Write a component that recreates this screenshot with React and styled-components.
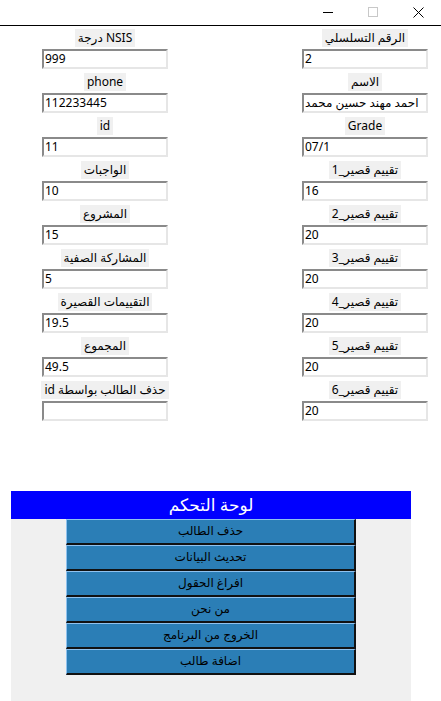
import React from "react";
import styled, { createGlobalStyle } from "styled-components";

const Global = createGlobalStyle`
  html, body { margin: 0; padding: 0; background: #fff; }
  body { width: 441px; height: 701px; overflow: hidden; font-family: "Noto Sans", "DejaVu Sans", sans-serif; }
`;

const Window = styled.div`
  width: 441px;
  height: 701px;
  display: flex;
  flex-direction: column;
  background: #fff;
`;

const TitleBar = styled.div`
  height: 25px;
  border-bottom: 1px solid #000;
  display: flex;
  justify-content: flex-end;
  align-items: center;
`;

const CaptionButton = styled.div`
  width: 45px;
  height: 25px;
  display: flex;
  align-items: center;
  justify-content: center;
`;

const Form = styled.div`
  display: flex;
  padding: 3px 0 0 42px;
  gap: 134px;
`;

const Column = styled.div`
  width: 126px;
  display: flex;
  flex-direction: column;
  align-items: center;
`;

const Field = styled.div`
  width: 126px;
  display: flex;
  flex-direction: column;
  align-items: center;
  gap: 2px;
  margin-bottom: 4px;
`;

const Label = styled.div`
  height: 18px;
  line-height: 18px;
  padding: 0 3px;
  background: #f0f0f0;
  color: #000;
  font-size: 12px;
  white-space: nowrap;
  direction: rtl;
`;

const Entry = styled.div`
  box-sizing: border-box;
  width: 126px;
  height: 20px;
  background: #fff;
  border-top: 2px solid #8a8a8a;
  border-left: 2px solid #8a8a8a;
  border-right: 2px solid #e6e6e6;
  border-bottom: 2px solid #e6e6e6;
  font-size: 12px;
  line-height: 16px;
  padding-left: 1px;
  color: #000;
  white-space: nowrap;
  overflow: hidden;
`;

const Panel = styled.div`
  margin: 66px 0 0 11px;
  width: 400px;
  height: 210px;
  background: #f0f0f0;
  display: flex;
  flex-direction: column;
  align-items: center;
`;

const PanelHeader = styled.div`
  align-self: stretch;
  height: 28px;
  background: #0000ff;
  color: #fff;
  font-size: 17px;
  line-height: 28px;
  text-align: center;
`;

const ActionButton = styled.div`
  box-sizing: border-box;
  width: 290px;
  height: 26px;
  background: #2b7eb6;
  border-top: 1px solid #8fc2ef;
  border-left: 1px solid #8fc2ef;
  border-right: 2px solid #111;
  border-bottom: 2px solid #111;
  color: #000;
  font-size: 12px;
  line-height: 22px;
  text-align: center;
`;

const left = [
  ["NSIS درجة", "999"],
  ["phone", "112233445"],
  ["id", "11"],
  ["الواجبات", "10"],
  ["المشروع", "15"],
  ["المشاركة الصفية", "5"],
  ["التقييمات القصيرة", "19.5"],
  ["المجموع", "49.5"],
  ["حذف الطالب بواسطة id", ""],
];

const right = [
  ["الرقم التسلسلي", "2"],
  ["الاسم", "احمد مهند حسين محمد"],
  ["Grade", "07/1"],
  ["تقييم قصير_1", "16"],
  ["تقييم قصير_2", "20"],
  ["تقييم قصير_3", "20"],
  ["تقييم قصير_4", "20"],
  ["تقييم قصير_5", "20"],
  ["تقييم قصير_6", "20"],
];

const buttons = [
  "حذف الطالب",
  "تحديث البيانات",
  "افراغ الحقول",
  "من نحن",
  "الخروج من البرنامج",
  "اضافة طالب",
];

const renderCol = (items) =>
  items.map(([l, v], i) => (
    <Field key={i}>
      <Label>{l}</Label>
      <Entry>{v}</Entry>
    </Field>
  ));

export default function App() {
  return (
    <>
      <Global />
      <Window>
        <TitleBar>
          <CaptionButton>
            <svg width="11" height="11" viewBox="0 0 11 11">
              <line x1="0" y1="5.5" x2="10" y2="5.5" stroke="#000" strokeWidth="1" />
            </svg>
          </CaptionButton>
          <CaptionButton>
            <svg width="11" height="11" viewBox="0 0 11 11">
              <rect x="0.5" y="0.5" width="9" height="9" fill="none" stroke="#c8c8c8" strokeWidth="1" />
            </svg>
          </CaptionButton>
          <CaptionButton>
            <svg width="11" height="11" viewBox="0 0 11 11">
              <path d="M0.5 0.5 L10.5 10.5 M10.5 0.5 L0.5 10.5" stroke="#000" strokeWidth="1" />
            </svg>
          </CaptionButton>
        </TitleBar>
        <Form>
          <Column>{renderCol(left)}</Column>
          <Column>{renderCol(right)}</Column>
        </Form>
        <Panel>
          <PanelHeader>لوحة التحكم</PanelHeader>
          {buttons.map((b) => (
            <ActionButton key={b}>{b}</ActionButton>
          ))}
        </Panel>
      </Window>
    </>
  );
}
